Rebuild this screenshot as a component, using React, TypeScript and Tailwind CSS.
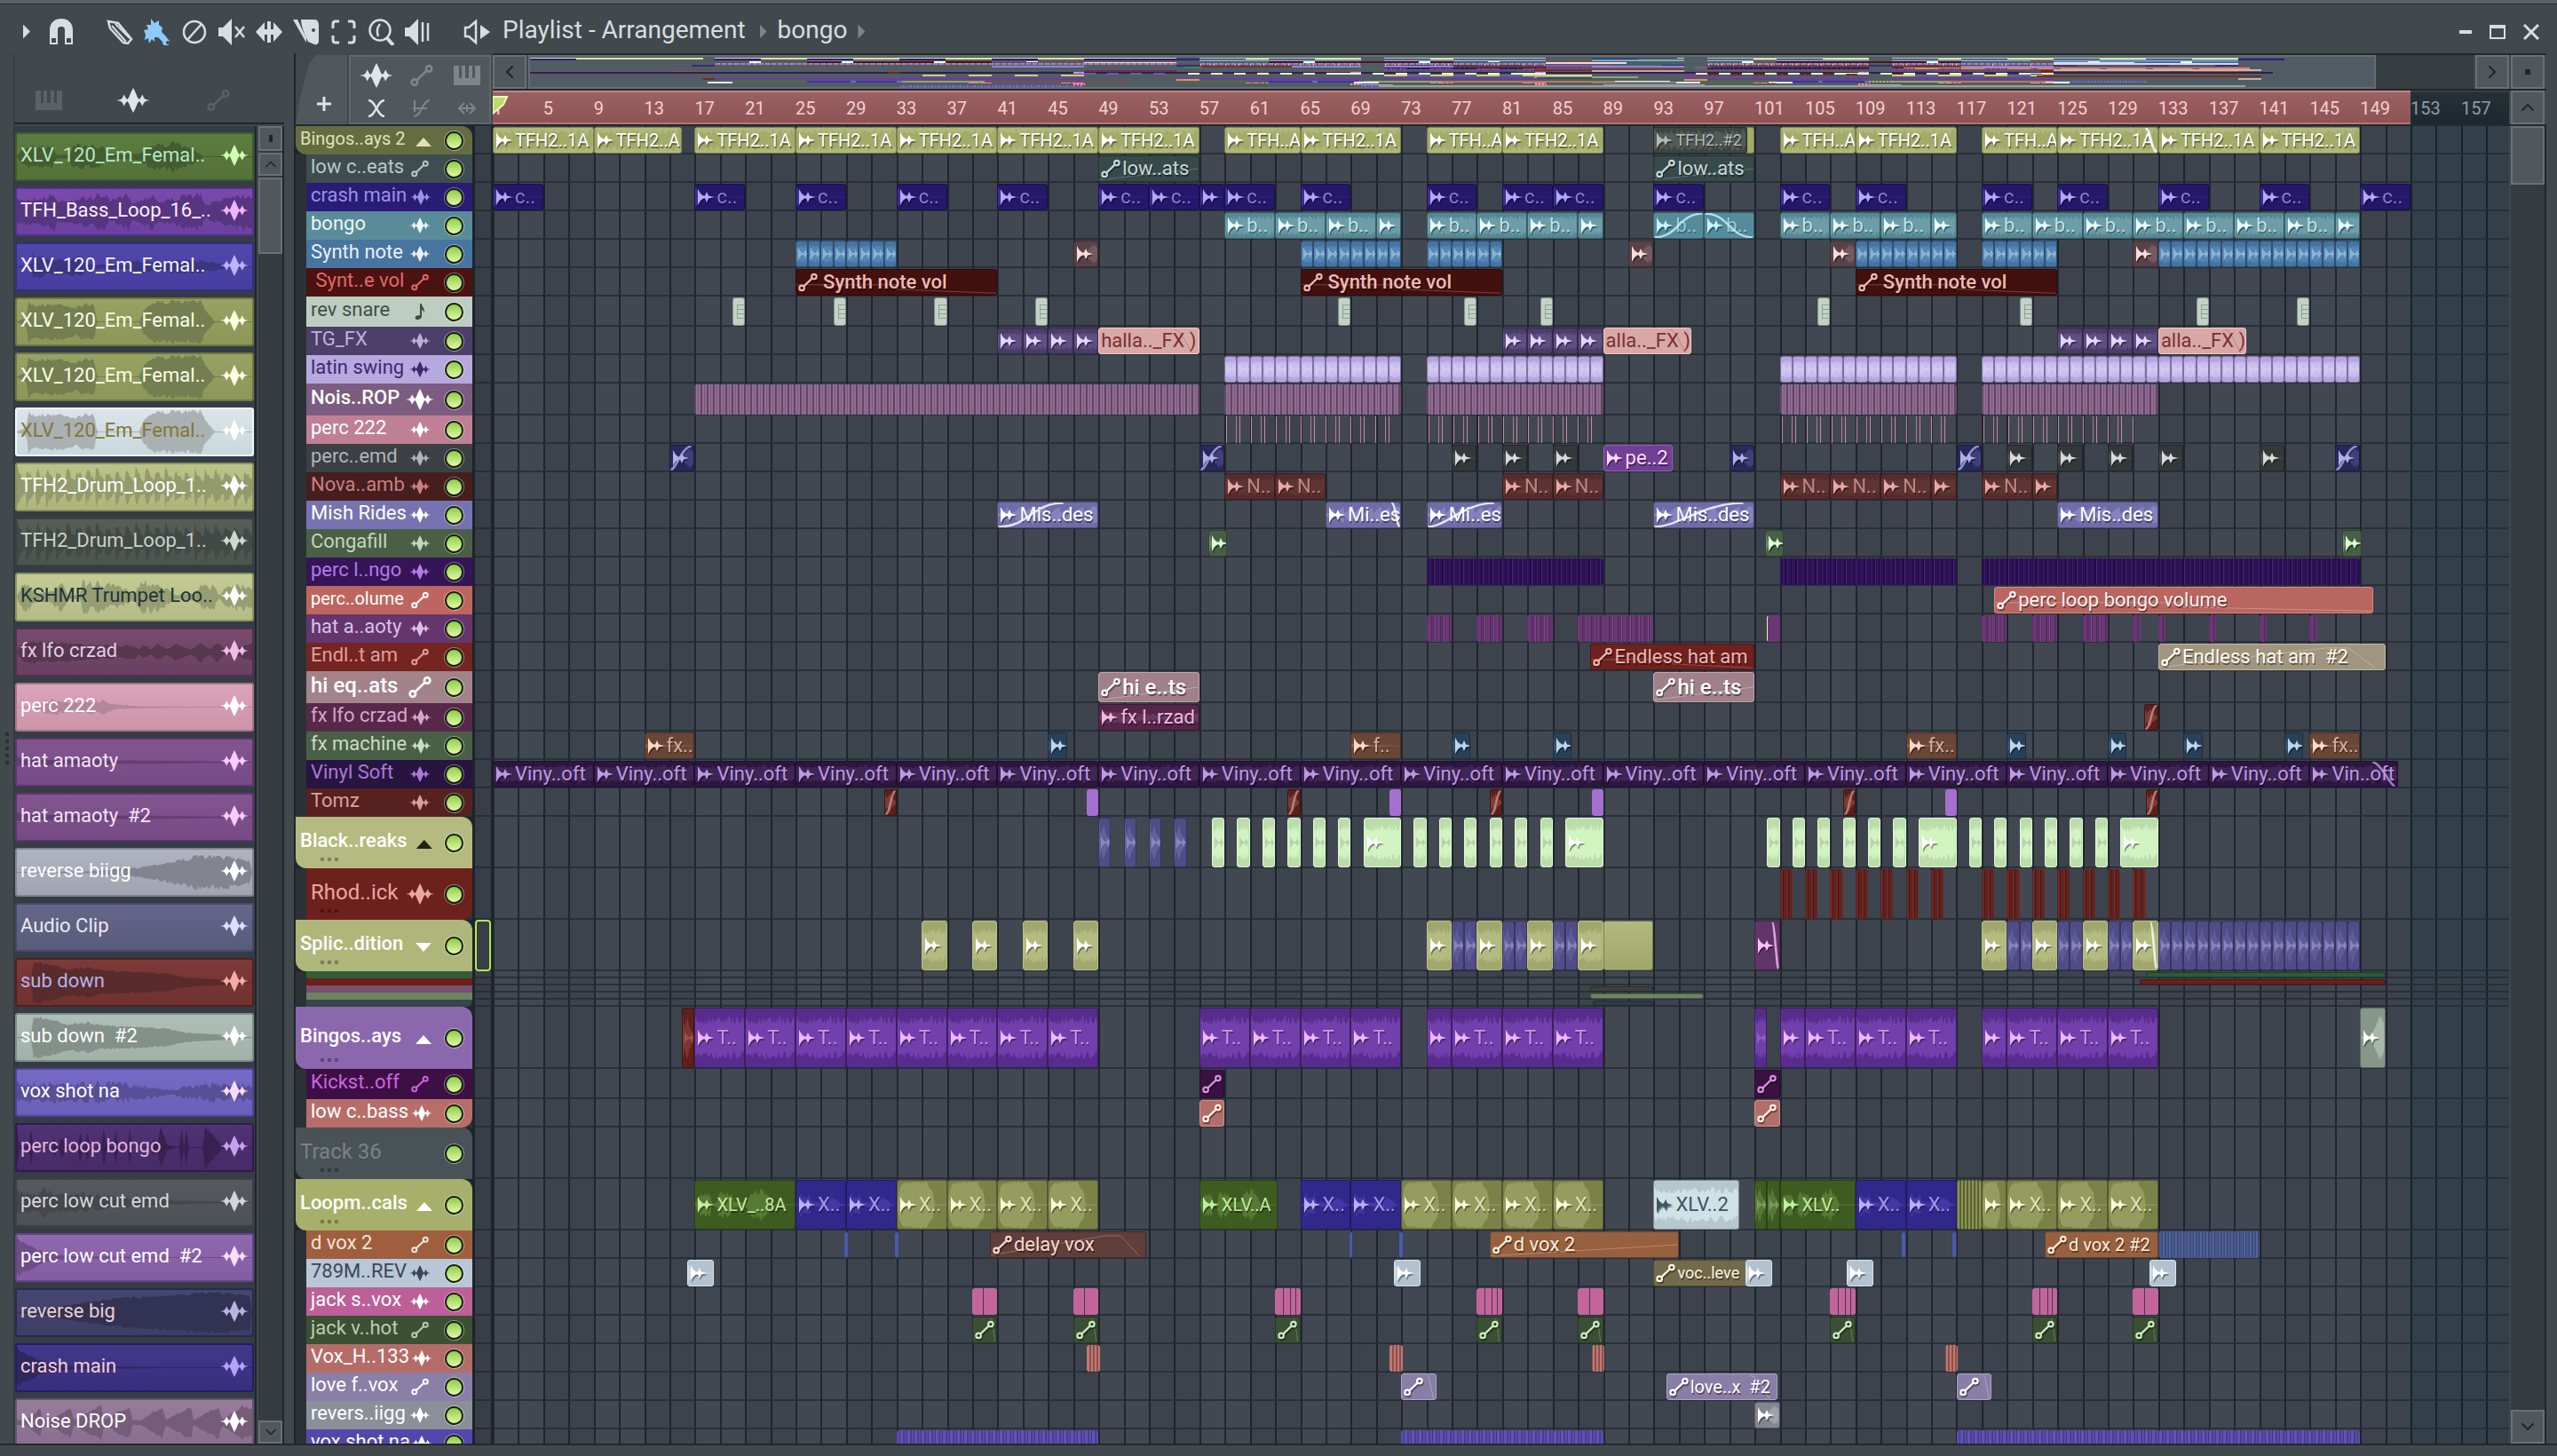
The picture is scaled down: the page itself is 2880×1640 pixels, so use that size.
import type { ReactNode } from "react";
import clsx from "clsx";
import { ChevronDown, ChevronLeft, ChevronRight, ChevronUp } from "lucide-react";

// number of bars that fit in the visible timeline
const BARS = 159.8;
const pct = (bars: number) => `${(bars / BARS) * 100}%`;

/* ---------- waveforms ---------- */

type Env = [number, number][];

// mirrored waveform outline in a 100 x 100 box
function wavePath(env: Env, n: number, rough: number) {
  let seed = 7;
  const rnd = () => {
    seed = (seed * 16807) % 2147483647;
    return seed / 2147483647;
  };
  const amp = (x: number) => {
    for (let i = 1; i < env.length; i++) {
      const [x0, a0] = env[i - 1];
      const [x1, a1] = env[i];
      if (x <= x1) return a0 + ((a1 - a0) * (x - x0)) / (x1 - x0 || 1);
    }
    return env[env.length - 1][1];
  };
  const top: string[] = [];
  const bottom: string[] = [];
  for (let i = 0; i <= n; i++) {
    const x = (i / n) * 100;
    const a = amp(x);
    const t = 50 - 49 * a * (1 - rough * rnd()) - 0.8;
    const b = 50 + 49 * a * (1 - rough * rnd()) + 0.8;
    top.push(`${x.toFixed(1)} ${t.toFixed(1)}`);
    bottom.unshift(`${x.toFixed(1)} ${b.toFixed(1)}`);
  }
  return `M${top.join("L")}L${bottom.join("L")}Z`;
}

// decaying hits, one every `step` percent
function hits(step: number, peak: number, floor: number): Env {
  const env: Env = [];
  for (let x = 0; x < 100; x += step) {
    env.push([x, peak], [x + step * 0.9, floor]);
  }
  env.push([100, floor]);
  return env;
}

const WAVES = {
  voiceA: wavePath([[0, 0], [2, 0.35], [6, 0.55], [15, 0.5], [17, 0.05], [22, 0.1], [24, 0.6], [36, 0.5], [40, 0.1], [52, 0.15], [57, 0.6], [68, 0.7], [76, 0.3], [79, 0], [100, 0]], 160, 0.4),
  voiceB: wavePath([[0, 0], [6, 0.1], [7, 0.75], [14, 0.35], [26, 0.5], [32, 0.1], [48, 0.1], [50, 0.35], [62, 0.15], [70, 0.35], [84, 0.25], [90, 0.05], [100, 0]], 160, 0.5),
  voiceC: wavePath([[0, 0], [4, 0.2], [5, 1], [7, 0.8], [20, 0.85], [25, 0.65], [30, 0.9], [33, 0.75], [34, 0], [52, 0], [54, 0.6], [58, 0.95], [78, 1], [80, 0.6], [84, 0], [100, 0]], 160, 0.2),
  bass: wavePath([[0, 0.6], [12, 0.7], [16, 0.9], [17, 0.5], [30, 0.7], [38, 0.9], [39, 0.5], [48, 0.9], [49, 0.4], [58, 0.9], [60, 0.5], [72, 0.8], [78, 0.9], [80, 0.3], [90, 0.8], [100, 0.85]], 150, 0.35),
  drum: wavePath(hits(4.2, 1, 0.25), 190, 0.4),
  drumClip: wavePath(hits(6, 1, 0.55), 60, 0.3),
  trumpet: wavePath([[0, 0], [3, 0.9], [6, 0.5], [9, 0.2], [15, 0.3], [19, 0.8], [22, 0.1], [27, 0.1], [28, 0.8], [42, 0.6], [50, 0.2], [53, 0.9], [60, 0.7], [68, 0.1], [76, 0.2], [78, 0.6], [84, 0.55], [86, 0.1], [90, 0.7], [100, 0.6]], 150, 0.5),
  lfo: wavePath([[0, 0], [3, 0.55], [20, 0.45], [40, 0.3], [50, 0.3], [52, 0.1], [54, 0.35], [57, 0.1], [60, 0.4], [64, 0.1], [67, 0.45], [74, 0.1], [78, 0.5], [82, 0.1], [85, 0.5], [89, 0.05], [100, 0.4]], 110, 0.3),
  tail: wavePath([[0, 0], [7, 0], [9, 0.15], [14, 0.4], [22, 0.25], [36, 0.35], [42, 0.12], [50, 0.05], [60, 0.02], [100, 0]], 140, 0.5),
  thin: wavePath([[0, 0.2], [4, 0.12], [40, 0.07], [60, 0.06], [100, 0]], 60, 0.3),
  rise: wavePath([[0, 0], [30, 0.03], [50, 0.2], [65, 0.5], [77, 0.8], [92, 0.75], [99, 0.6], [100, 0]], 140, 0.3),
  riseBig: wavePath([[0, 0], [10, 0.1], [25, 0.4], [45, 0.7], [70, 0.85], [82, 0.95], [99, 0.85], [100, 0]], 140, 0.15),
  sub: wavePath([[0, 0], [6, 0], [7, 1], [16, 0.8], [22, 0.6], [30, 0.7], [36, 0.55], [50, 0.5], [64, 0.4], [72, 0.2], [90, 0.1], [100, 0]], 170, 0.15),
  vox: wavePath([[0, 0.5], [20, 0.5], [45, 0.5], [55, 0.35], [65, 0.1], [72, 0.3], [88, 0.5], [100, 0.45]], 150, 0.6),
  bongo: wavePath([[0, 1], [1, 0.1], [5, 0.02], [6, 1], [7, 0], [15, 0], [16, 0.5], [17, 0], [18, 0], [19, 0.5], [21, 0.05], [26, 0], [27, 0.8], [28, 0], [29, 0], [30, 0.7], [31, 0], [36, 0], [37, 1], [38, 0.1], [41, 0], [42, 0.9], [43, 0], [47, 0], [48, 1], [49, 0], [57, 0], [58, 0.4], [60, 0.1], [61, 1], [64, 0.1], [69, 0], [70, 0.9], [71, 0], [72, 1], [73, 0], [79, 0], [80, 1], [83, 0.6], [87, 0.1], [90, 0], [100, 0]], 190, 0.15),
  emd: wavePath([[0, 0.6], [8, 0.5], [12, 0.8], [15, 0.45], [25, 0.5], [40, 0.3], [55, 0.2], [70, 0.08], [100, 0]], 150, 0.5),
  decay: wavePath([[0, 0.9], [4, 0.75], [9, 0.4], [14, 0.15], [25, 0.05], [60, 0.01], [100, 0]], 110, 0.3),
  swell: wavePath([[0, 0.1], [4, 0.1], [10, 0.7], [11, 0.1], [17, 0.3], [23, 0.75], [24, 0.1], [30, 0.5], [36, 0.8], [37, 0.1], [43, 0.5], [48, 0.75], [49, 0.1], [53, 0.1], [62, 0.8], [63, 0.1], [74, 0.8], [75, 0.1], [86, 0.8], [87, 0.1], [96, 0.8], [100, 0.6]], 120, 0.2),
  body: wavePath([[0, 0.75], [20, 0.7], [50, 0.8], [100, 0.7]], 60, 0.4),
  hit: wavePath([[0, 0.9], [15, 0.4], [45, 0.9], [60, 0.45], [100, 0.1]], 24, 0.3),
  full: wavePath([[0, 0.1], [4, 0.7], [10, 0.95], [30, 1], [60, 1], [66, 0.75], [72, 0.6], [76, 0], [100, 0]], 50, 0.1),
};
type WaveName = keyof typeof WAVES;

function Wave({ name, className }: { name: WaveName; className: string }) {
  return (
    <svg viewBox="0 0 100 100" preserveAspectRatio="none" className={clsx("absolute inset-0 w-full h-full", className)}>
      <path d={WAVES[name]} />
    </svg>
  );
}

/* ---------- icons ---------- */

const WaveIcon = ({ className }: { className?: string }) => (
  <svg viewBox="0 0 40 30" fill="currentColor" className={className}>
    <path d="M0 15 5 14 7 12 9 8 11 12 13 14 15 11 17 6 20 0 23 6 25 11 27 14 29 12 31 8 33 12 35 14 40 15 35 16 33 18 31 22 29 18 27 16 25 19 23 24 20 30 17 24 15 19 13 16 11 18 9 22 7 18 5 16Z" />
  </svg>
);

const AutoIcon = ({ className }: { className?: string }) => (
  <svg viewBox="0 0 24 24" fill="none" stroke="currentColor" strokeWidth="2.4" className={className}>
    <circle cx="4.5" cy="19" r="3" />
    <circle cx="19.5" cy="5" r="3" />
    <path d="M7 16.8 17 7.2" />
  </svg>
);

const HalfWaveIcon = ({ className }: { className?: string }) => (
  <svg viewBox="0 0 20 20" fill="currentColor" className={className}>
    <path d="M1 1 4 6 7 8.6 9 8.6 11 4 13 8.6 19 10 13 11.4 11 16 9 11.4 7 11.4 4 14 1 19Z" />
  </svg>
);

const PianoIcon = ({ className }: { className?: string }) => (
  <svg viewBox="0 0 30 22" fill="currentColor" className={className}>
    <path d="M0 0H6V14H9V0H13V14H17V0H21V14H24V0H30V22H0Z" />
  </svg>
);

const NoteIcon = ({ className }: { className?: string }) => (
  <svg viewBox="0 0 20 20" fill="currentColor" className={className}>
    <path d="M10 1H12C12 5 16 6 15 12 14.500 9 13 8 12 8V15C12 18 9 19.500 6.500 19 4 18.500 4 15.500 6.500 14.500 8 14 9.500 14 10 14.500Z" />
  </svg>
);

function ToolIcon({ children, className }: { children: ReactNode; className?: string }) {
  return (
    <svg viewBox="0 0 30 30" fill="currentColor" className={clsx("size-[30px]", className)}>
      {children}
    </svg>
  );
}

const line = { fill: "none", stroke: "currentColor", strokeWidth: 2.5 };

const tools: { name: string; active?: boolean; gap: string; icon: ReactNode }[] = [
  {
    name: "Snap",
    gap: "ml-5",
    icon: (
      <path d="M2 29V13C2 4 8 0 15 0s13 4 13 13v16h-9V13c0-3-1-4-4-4s-4 1-4 4v16ZM4 22v5h5v-5Zm17 0v5h5v-5Z" fillRule="evenodd" />
    ),
  },
  {
    name: "Draw",
    gap: "ml-9",
    icon: (
      <g {...line}>
        <path d="M2 3 13 5 28 23 24 28 19 27 4 11Z" />
        <path d="M6 8 22 26M10 6 26 22" strokeWidth="2" />
      </g>
    ),
  },
  {
    name: "Paint",
    active: true,
    gap: "ml-3",
    icon: (
      <path
        d="M8 0 12 5 17 2 17 7 21 10 20 15 25 20 27 23a4 4 0 1 1-6 3L16 21 12 21 12 26 9 23 6 28 5 22 1 24 2 18 0 13 5 12 3 7 8 7ZM27 25a2 2 0 1 0 .1 0Z"
        fillRule="evenodd"
      />
    ),
  },
  {
    name: "Delete",
    gap: "ml-3",
    icon: (
      <g {...line}>
        <circle cx="15" cy="15" r="12" />
        <path d="M23 6 7 24" />
      </g>
    ),
  },
  {
    name: "Mute",
    gap: "ml-3",
    icon: (
      <g>
        <path d="M0 10H5L15 0V30L5 20H0Z" />
        <path d="M19 9 29 21M29 9 19 21" {...line} />
      </g>
    ),
  },
  { name: "Slip", gap: "ml-3", icon: <path d="M0 15 10 4V12H13V3H17V12H20V4L30 15 20 26V18H17V27H13V18H10V26Z" /> },
  {
    name: "Slice",
    gap: "ml-3",
    icon: <path d="M0 1H5L15 22V27ZM9 1H24C28 1 29 4 29 8V25C29 28 27 30 24 29L17 26Q9 10 9 1ZM23 11a2 2 0 1 0 .1 0Z" fillRule="evenodd" />,
  },
  {
    name: "Select",
    gap: "ml-3",
    icon: <path d="M3 11V6Q3 3 6 3H10M20 3H24Q27 3 27 6V11M27 19V24Q27 27 24 27H20M10 27H6Q3 27 3 24V19" {...line} strokeWidth={3} />,
  },
  {
    name: "Zoom",
    gap: "ml-3",
    icon: (
      <g {...line}>
        <circle cx="14" cy="13" r="11.500" />
        <path d="M12 20Q9 12 14 6" />
        <path d="M22 22 29 30" strokeWidth="4" />
      </g>
    ),
  },
  {
    name: "Playback",
    gap: "ml-3",
    icon: (
      <g>
        <path d="M0 10H5L15 0V30L5 20H0Z" />
        <path d="M20 4V26M26 5V25" {...line} />
      </g>
    ),
  },
];

/* ---------- clips ---------- */

type Kind = {
  bg: string;
  ink: string;
  edge?: string;
  wave?: WaveName;
  fill?: string;
  icon?: "audio" | "auto" | "faint" | "none" | "steps";
  label?: string;
};

const KINDS = {
  drum: { bg: "bg-[#b0b878]", ink: "text-white", wave: "drumClip", fill: "fill-[#a3ab69]", label: "text-[20px]" },
  drumGrey: { bg: "bg-[#3c4542]", ink: "text-[#b5bab7]", wave: "drumClip", fill: "fill-[#525b55]", label: "text-[18px]" },
  drumEnd: { bg: "bg-[#a4ab67]", ink: "text-white", icon: "none" },
  lowAuto: { bg: "bg-[#374948]", ink: "text-[#c5d8d8]", icon: "auto" },
  crash: { bg: "bg-[#25186a]", ink: "text-[#b5a8ff]", wave: "decay", fill: "fill-[#3c2f92]", label: "text-[22px] opacity-70" },
  bongo: { bg: "bg-[#548794]", ink: "text-[#e6ffff]", wave: "drumClip", fill: "fill-[#6c9da8]", label: "text-[22px] opacity-70" },
  bongoFade: { bg: "bg-[#558c9c]", ink: "text-[#c8f4ff]", label: "text-[22px] opacity-60" },
  synth: { bg: "bg-[#4374a4]", ink: "text-[#a4c8dc]", wave: "body", fill: "fill-[#5686b6]", icon: "faint" },
  brown: { bg: "bg-[#584248]", ink: "text-[#ffdcdc]", wave: "rise", fill: "fill-[#745a60]" },
  volAuto: { bg: "bg-[#42100f]", ink: "text-[#f2b8b0]", icon: "auto", label: "text-[22px] font-medium pl-1.5" },
  snare: { bg: "bg-[#c3d2c6]", ink: "text-[#8da091]", icon: "steps" },
  tg: { bg: "bg-[#4a3d6a]", ink: "text-[#e4d6ff]", wave: "body", fill: "fill-[#5d5082]" },
  halla: { bg: "bg-[#d8a8a6]", ink: "text-[#7a3030]", edge: "border-[#f3c9c4]", icon: "none", label: "text-[22px] [text-shadow:none]" },
  latin: { bg: "bg-[#b5a4e0]", ink: "text-[#d8d0ea]", wave: "body", fill: "fill-[#c9bcf0]", icon: "faint" },
  noise: { bg: "bg-[repeating-linear-gradient(90deg,#674968_0_1px,#8f6d94_1px_3px,#7a587e_3px_4px,#8f6d94_4px_6px,#5c405e_6px_7px)]", ink: "", icon: "none", edge: "border-transparent" },
  perc222: { bg: "bg-[repeating-linear-gradient(90deg,transparent_0_1px,#c98a9e_1px_2px,transparent_2px_12px,#b47c90_12px_13px,transparent_13px_16px,#c98a9e_16px_17px,transparent_17px_28px)]", ink: "", icon: "none", edge: "border-transparent" },
  navy: { bg: "bg-[#29285a]", ink: "text-[#b0b0f0]", wave: "rise", fill: "fill-[#413f78]" },
  emd: { bg: "bg-[#34383b]", ink: "text-[#dadada]", wave: "emd", fill: "fill-[#494d4f]" },
  emd2: { bg: "bg-[#713f94]", ink: "text-[#ffd9ff]", edge: "border-[#9460b6]" },
  nova: { bg: "bg-[#552c2b]", ink: "text-[#eba9a6]", wave: "body", fill: "fill-[#5f3533]", label: "text-[22px] opacity-70" },
  mish: { bg: "bg-[#706ca8]", ink: "text-white", wave: "swell", fill: "fill-[#8682c0]" },
  conga: { bg: "bg-[#456044]", ink: "text-[#dcffd8]", wave: "decay", fill: "fill-[#6a8c66]" },
  percLoop: { bg: "bg-[repeating-linear-gradient(90deg,#2a0f50_0_2px,#3a1b66_2px_3px,#2e1258_3px_5px,#250a48_5px_7px,#432872_7px_8px,#2e1258_8px_11px)]", ink: "", icon: "none", edge: "border-transparent" },
  percVol: { bg: "bg-[#b96560]", ink: "text-[#fff0ec]", edge: "border-[#d98a80]", icon: "auto" },
  hat: { bg: "bg-[repeating-linear-gradient(90deg,#6e3678_0_4px,#48304f_4px_5px,#633070_5px_8px,#844a90_8px_9px,#3e3a48_9px_10px)]", ink: "", icon: "none", edge: "border-transparent" },
  hatEnd: { bg: "bg-[#6b3676]", ink: "", icon: "none", edge: "border-transparent border-l-[#e8f0b0]" },
  endless: { bg: "bg-[#6d2220]", ink: "text-[#f0b4ac]", icon: "auto" },
  endless2: { bg: "bg-[#a0957f]", ink: "text-[#fffaf0]", edge: "border-[#c2b8a2]", icon: "auto" },
  hiEq: { bg: "bg-[#a08089]", ink: "text-white", edge: "border-[#c2a4ac]", icon: "auto", label: "text-[24px] font-medium" },
  lfo: { bg: "bg-[#55264a]", ink: "text-[#f0b8e2]", wave: "lfo", fill: "fill-[#693a5e]" },
  tomRed: { bg: "bg-[#5a1f1c]", ink: "text-[#c89088]", wave: "hit", fill: "fill-[#7c3c36]", icon: "none" },
  fx: { bg: "bg-[#694638]", ink: "text-[#ffd8c0]", wave: "thin", fill: "fill-[#845d4c]", label: "text-[22px] opacity-70" },
  fxBlue: { bg: "bg-[#2a4059]", ink: "text-[#b8d8f0]", wave: "emd", fill: "fill-[#365370]" },
  vinyl: { bg: "bg-[#2c1640]", ink: "text-[#c098e6]", wave: "body", fill: "fill-[#3e2654]" },
  tomPurple: { bg: "bg-[linear-gradient(90deg,#a56fd0_0_60%,#7c50a4_60%_68%,#a56fd0_68%)]", ink: "", icon: "none", edge: "border-transparent" },
  breakBlue: { bg: "bg-[#504c86]", ink: "text-[#9c98c6]", wave: "hit", fill: "fill-[#65619e]", icon: "faint" },
  breakGreen: { bg: "bg-[#bbdcab]", ink: "text-[#b4c0b0]", edge: "border-[#e0f8d4]", wave: "body", fill: "fill-[#d2f4c0]", icon: "faint" },
  breakLong: { bg: "bg-[#bbdcab]", ink: "text-white", edge: "border-[#e0f8d4]", wave: "body", fill: "fill-[#d2f4c0]" },
  rhod: { bg: "bg-[repeating-linear-gradient(90deg,#742620_0_2px,#4c1512_2px_3px,#68201b_3px_5px,#3b3034_5px_6px)]", ink: "", icon: "none", edge: "border-transparent" },
  splice: { bg: "bg-[#a0a66c]", ink: "text-white", wave: "body", fill: "fill-[#b4bb80]", edge: "border-[#bac284]" },
  splicePlain: { bg: "bg-linear-to-b from-[#b2b97c] to-[#a0a76c]", ink: "", icon: "none" },
  spliceBlue: { bg: "bg-[#504c86]", ink: "text-[#9c98c6]", wave: "hit", fill: "fill-[#5f5b98]", icon: "faint" },
  splicePurple: { bg: "bg-[#623569]", ink: "text-[#ffc0f8]" },
  thinGreen: { bg: "bg-[#2f5a36]", ink: "", icon: "none" },
  thinRed: { bg: "bg-[#6a201c]", ink: "", icon: "none" },
  thinGrey: { bg: "bg-[#3e403c]", ink: "", icon: "none" },
  thinMoss: { bg: "bg-[#6c8560]", ink: "", icon: "none" },
  thinDark: { bg: "bg-[#2f3c46]", ink: "", icon: "none" },
  bass: { bg: "bg-[#582c8c]", ink: "text-[#f2b8ff]", wave: "body", fill: "fill-[#7240ac]", label: "text-[22px] opacity-70" },
  bassTail: { bg: "bg-[#582c8c]", ink: "text-[#9c6cc8]", wave: "body", fill: "fill-[#7240ac]", icon: "faint" },
  bassRed: { bg: "bg-[#5e201c]", ink: "text-[#a06058]", wave: "hit", fill: "fill-[#7c3630]", icon: "faint" },
  subEnd: { bg: "bg-[#869688]", ink: "text-white", wave: "rise", fill: "fill-[#a8b8ac]" },
  kick: { bg: "bg-[#3b1142]", ink: "text-[#d890e4]", icon: "auto" },
  lowBass: { bg: "bg-[#b46e6a]", ink: "text-[#fff0ea]", edge: "border-[#d49088]", icon: "auto" },
  voxGreen: { bg: "bg-[#3e5b22]", ink: "text-[#c0f09a]", wave: "voiceA", fill: "fill-[#567a36]", label: "text-[20px]" },
  voxGreenTail: { bg: "bg-[#3e5b22]", ink: "text-[#88a870]", wave: "hit", fill: "fill-[#567a36]", icon: "faint" },
  voxBlue: { bg: "bg-[#32278a]", ink: "text-[#b8b0ff]", wave: "voiceB", fill: "fill-[#4438a6]", label: "text-[22px] opacity-80" },
  voxOlive: { bg: "bg-[#7a8248]", ink: "text-[#ffffd8]", wave: "full", fill: "fill-[#959c60]", label: "text-[22px] opacity-70" },
  oliveStripe: { bg: "bg-[repeating-linear-gradient(90deg,#8c9452_0_2px,#5a6234_2px_4px)]", ink: "", icon: "none" },
  voxWhite: { bg: "bg-[#b6c8ce]", ink: "text-[#3c5560]", wave: "body", fill: "fill-[#cfe2e8]", label: "text-[22px] [text-shadow:none]" },
  voxThin: { bg: "bg-[#4c5ca0]", ink: "", icon: "none" },
  delay: { bg: "bg-[#5f3e3c]", ink: "text-[#ffd8cc]", icon: "auto" },
  dvox: { bg: "bg-[#97603f]", ink: "text-[#ffeada]", icon: "auto" },
  dvoxShort: { bg: "bg-[#97603f]", ink: "text-[#ffeada]", icon: "auto", label: "text-[20px]" },
  dvoxStripe: { bg: "bg-[repeating-linear-gradient(90deg,#465894_0_3px,#384a74_3px_4px,#5064a2_4px_6px,#3c4452_6px_7px)]", ink: "", icon: "none", edge: "border-transparent" },
  rev: { bg: "bg-[#b4c2d0]", ink: "text-white", edge: "border-[#d8e4ee]", wave: "decay", fill: "fill-[#ccd8e4]" },
  voc: { bg: "bg-[#736a4c]", ink: "text-[#fff8e0]", icon: "auto", label: "text-[18px]" },
  jackPink: { bg: "bg-[linear-gradient(90deg,#c4649c_0_43%,#43394a_43%_47%,#c4649c_47%)]", ink: "", icon: "none", edge: "border-transparent" },
  jackPink3: { bg: "bg-[linear-gradient(90deg,#c4649c_0_28%,#43394a_28%_32%,#c4649c_32%_60%,#43394a_60%_64%,#c4649c_64%_82%,#43394a_82%_86%,#c4649c_86%)]", ink: "", icon: "none", edge: "border-transparent" },
  jackGreen: { bg: "bg-[#3a4f33]", ink: "text-[#ccecc0]", icon: "auto" },
  voxH: { bg: "bg-[repeating-linear-gradient(90deg,#c07a72_0_2px,#8c504c_2px_4px)]", ink: "", icon: "none", edge: "border-transparent" },
  love: { bg: "bg-[#897ea6]", ink: "text-white", edge: "border-[#aca2c6]", icon: "auto", label: "text-[20px]" },
  revers: { bg: "bg-[#84858f]", ink: "text-white", wave: "rise", fill: "fill-[#a0a2ac]" },
  voxShot: { bg: "bg-[repeating-linear-gradient(90deg,#5c4ab4_0_2px,#41405e_2px_3px,#6450c0_3px_6px,#4a4184_6px_8px)]", ink: "", icon: "none", edge: "border-transparent" },
} satisfies Record<string, Kind>;

type Fade = "in" | "inHalf" | "inSoft" | "down" | "out" | "steep" | "rise" | "fall" | "drop" | "tent";
type ClipData = { kind: keyof typeof KINDS; at: number; len: number; label?: string; fade?: Fade };

const c = (kind: ClipData["kind"], at: number, len: number, label?: string, fade?: Fade): ClipData => ({ kind, at, len, label, fade });
// same clip at a list of bars
const each = (kind: ClipData["kind"], bars: number[], len: number, label?: string, fade?: Fade) =>
  bars.map((at) => c(kind, at, len, label, fade));
// back-to-back clips from one bar to another
const run = (kind: ClipData["kind"], from: number, to: number, step: number, label?: string) => {
  const out: ClipData[] = [];
  for (let at = from; at < to; at += step) out.push(c(kind, at, step, label));
  return out;
};

const FADES: Record<Fade, { d: string; soft?: boolean }> = {
  in: { d: "M0 98C50 98 50 2 100 2" },
  inHalf: { d: "M0 98C32 98 34 2 66 2" },
  inSoft: { d: "M0 98C24 98 50 2 90 2" },
  down: { d: "M0 2C50 2 50 98 100 98" },
  out: { d: "M88 2C94 2 94 98 100 98" },
  steep: { d: "M72 2C82 2 92 98 98 98" },
  rise: { d: "M0 95 100 50", soft: true },
  fall: { d: "M0 60 50 60 50 78 100 94", soft: true },
  drop: { d: "M76 4C84 10 88 70 94 98", soft: true },
  tent: { d: "M0 92 74 14 84 14 96 96", soft: true },
};

function Clip({ kind, at, len, label, fade }: ClipData) {
  const k: Kind = KINDS[kind];
  const icon = k.icon ?? "audio";
  return (
    <div
      className={clsx(
        "absolute top-px bottom-px flex items-center rounded-[3px] border overflow-hidden",
        k.bg,
        k.ink,
        k.edge ?? "border-black/30"
      )}
      style={{ left: pct(at - 1), width: pct(len) }}
    >
      {k.wave && <Wave name={k.wave} className={k.fill ?? ""} />}
      {icon === "audio" && <HalfWaveIcon className="relative size-5 ml-0.5 shrink-0 drop-shadow-[1px_2px_0px_rgba(0,0,0,0.4)]" />}
      {icon === "faint" && <HalfWaveIcon className="relative size-4 ml-px shrink-0 opacity-70" />}
      {icon === "auto" && <AutoIcon className="relative size-[22px] ml-0.5 shrink-0 drop-shadow-[1px_2px_0px_rgba(0,0,0,0.4)]" />}
      {icon === "steps" && (
        <span className="ml-1 flex flex-1 flex-col gap-1 border-l border-current">
          <i className="h-px bg-current" />
          <i className="h-px bg-current" />
          <i className="h-px bg-current" />
          <i className="h-px bg-current" />
        </span>
      )}
      {label && (
        <span
          className={clsx(
            "relative pl-0.5 leading-7 whitespace-pre [text-shadow:1px_2px_0px_rgba(0,0,0,0.45)]",
            k.label ?? "text-[22px]"
          )}
        >
          {label}
        </span>
      )}
      {fade && (
        <svg viewBox="0 0 100 100" preserveAspectRatio="none" className="absolute inset-0 w-full h-full">
          <path
            d={FADES[fade].d}
            fill="none"
            stroke="currentColor"
            strokeWidth={FADES[fade].soft ? 1 : 2.5}
            vectorEffect="non-scaling-stroke"
            opacity={FADES[fade].soft ? 0.3 : 0.8}
          />
        </svg>
      )}
    </div>
  );
}

/* ---------- tracks ---------- */

type Track = {
  name: string;
  h: string;
  head: string;
  icon: "wave" | "auto" | "note" | "up" | "down" | "none";
  iconInk?: string;
  group?: boolean;
  last?: boolean;
  dots?: boolean;
  big?: boolean;
  selected?: boolean;
  clips: ClipData[];
};

const JACK = [39, 47, 63, 79, 87, 107, 123, 131];

const tracks: Track[] = [
  {
    name: "Bingos..ays 2", h: "h-8", head: "bg-[#656c41] text-[#dfe3b4] text-[20px]", icon: "up", group: true,
    clips: [
      c("drum", 1, 8, "TFH2..1A"), c("drum", 9, 7, "TFH2..A"), ...run("drum", 17, 57, 8, "TFH2..1A"),
      c("drum", 59, 6, "TFH..A"), c("drum", 65, 8, "TFH2..1A"), c("drum", 75, 6, "TFH..A"), c("drum", 81, 8, "TFH2..1A"),
      c("drumEnd", 100, 1), c("drumGrey", 93, 7.4, "TFH2..#2"),
      c("drum", 103, 6, "TFH..A"), c("drum", 109, 8, "TFH2..1A"), c("drum", 119, 6, "TFH..A"),
      c("drum", 125, 8, "TFH2..1A", "out"), c("drum", 133, 8, "TFH2..1A"), c("drum", 141, 8, "TFH2..1A"),
    ],
  },
  {
    name: "low c..eats", h: "h-8", head: "bg-[#3d4d50] text-[#b9c9c9] text-[22px]", icon: "auto",
    clips: each("lowAuto", [49, 93], 8, "low..ats", "rise"),
  },
  {
    name: "crash main", h: "h-8", head: "bg-[#281c74] text-[#9c90e8] text-[22px]", icon: "wave",
    clips: [
      c("crash", 57, 2),
      ...each("crash", [1, 17, 25, 33, 41, 49, 53, 59, 65, 75, 81, 85, 93, 103, 109, 119, 125, 133, 141, 149], 4, "c.."),
    ],
  },
  {
    name: "bongo", h: "h-8", head: "bg-[#5a8b99] text-[#eaf6f6] text-[22px]", icon: "wave",
    clips: [
      ...run("bongo", 59, 71, 4, "b.."), c("bongo", 71, 2), ...run("bongo", 75, 87, 4, "b.."), c("bongo", 87, 2),
      c("bongoFade", 93, 4, "b..", "in"), c("bongoFade", 97, 4, "b..", "down"),
      ...run("bongo", 103, 115, 4, "b.."), c("bongo", 115, 2), ...run("bongo", 119, 147, 4, "b.."), c("bongo", 147, 2),
    ],
  },
  {
    name: "Synth note", h: "h-8", head: "bg-[#4874a0] text-[#e8f0f8] text-[22px]", icon: "wave",
    clips: [
      ...run("synth", 25, 33, 1), ...run("synth", 65, 73, 1), ...run("synth", 75, 81, 1), ...run("synth", 109, 117, 1),
      ...run("synth", 119, 125, 1), ...run("synth", 133, 149, 1), ...each("brown", [47, 91, 107, 131], 2),
    ],
  },
  {
    name: " Synt..e vol", h: "h-8", head: "bg-[#4a1312] text-[#e06a62] text-[22px]", icon: "auto",
    clips: each("volAuto", [25, 65, 109], 16, "Synth note vol", "fall"),
  },
  {
    name: "rev snare", h: "h-[34px]", head: "bg-[#becdc2] text-[#3e4f45] text-[22px]", icon: "note",
    clips: each("snare", [20, 28, 36, 44, 68, 78, 84, 106, 122, 136, 144], 1),
  },
  {
    name: "TG_FX", h: "h-8", head: "bg-[#4c3f68] text-[#bdb0dc] text-[22px]", icon: "wave",
    clips: [
      c("halla", 49, 8, "halla.._FX )", "drop"), c("halla", 89, 7, "alla.._FX )", "drop"), c("halla", 133, 7, "alla.._FX )", "drop"),
      ...run("tg", 41, 49, 2), ...run("tg", 81, 89, 2), ...run("tg", 125, 133, 2),
    ],
  },
  {
    name: "latin swing", h: "h-8", head: "bg-[#b7a8de] text-[#3a2a72] text-[22px]", icon: "wave",
    clips: [...run("latin", 59, 73, 1), ...run("latin", 75, 89, 1), ...run("latin", 103, 117, 1), ...run("latin", 119, 149, 1)],
  },
  {
    name: "Nois..ROP", h: "h-9", head: "bg-[#7c5c80] text-white text-[22px] font-medium", icon: "wave", big: true,
    clips: [c("noise", 17, 40), ...each("noise", [59, 75, 103, 119], 14)],
  },
  {
    name: "perc 222", h: "h-8", head: "bg-[#bf8095] text-white text-[22px]", icon: "wave",
    clips: [...each("perc222", [59, 75, 103], 14), c("perc222", 119, 12.2)],
  },
  {
    name: "perc..emd", h: "h-8", head: "bg-[#3c4044] text-[#b0b5ba] text-[22px]", icon: "wave",
    clips: [
      ...each("navy", [15, 57, 117, 147], 2, undefined, "inSoft"), c("navy", 99, 2),
      ...each("emd", [77, 81, 85, 121, 125, 129, 133, 141], 2), c("emd2", 89, 5.5, "pe..2"),
    ],
  },
  {
    name: "Nova..amb", h: "h-8", head: "bg-[#461e1d] text-[#c98080] text-[22px]", icon: "wave",
    clips: [...each("nova", [59, 63, 81, 85, 103, 107, 111, 119], 4, "N.."), ...each("nova", [115, 123], 2)],
  },
  {
    name: "Mish Rides", h: "h-8", head: "bg-[#7773b0] text-white text-[22px]", icon: "wave",
    clips: [
      c("mish", 41, 8, "Mis..des", "inHalf"), c("mish", 67, 6, "Mi..es", "out"), c("mish", 75, 6, "Mi..es", "inSoft"),
      c("mish", 93, 8, "Mis..des", "inSoft"), c("mish", 125, 8, "Mis..des"),
    ],
  },
  {
    name: "Congafill", h: "h-8", head: "bg-[#4a5f45] text-[#c3d6bf] text-[22px]", icon: "wave",
    clips: each("conga", [57.7, 101.8, 147.6], 1.5),
  },
  {
    name: "perc l..ngo", h: "h-8", head: "bg-[#351458] text-[#b47ae6] text-[22px]", icon: "wave",
    clips: [...each("percLoop", [75, 103], 14), c("percLoop", 119, 30)],
  },
  {
    name: "perc..olume", h: "h-8", head: "bg-[#bd6660] text-white text-[20px]", icon: "auto",
    clips: [c("percVol", 120, 30, "perc loop bongo volume", "fall")],
  },
  {
    name: "hat a..aoty", h: "h-8", head: "bg-[#64366d] text-[#dcc0e6] text-[22px]", icon: "wave",
    clips: [
      ...each("hat", [75, 79, 83, 119, 123, 127], 2), c("hat", 87, 6), c("hatEnd", 102, 1),
      ...each("hat", [131, 133, 137, 141, 145], 0.6),
    ],
  },
  {
    name: "Endl..t am", h: "h-8", head: "bg-[#742522] text-[#e0a09a] text-[22px]", icon: "auto",
    clips: [c("endless", 88, 13, "Endless hat am", "fall"), c("endless2", 133, 18, "Endless hat am  #2", "tent")],
  },
  {
    name: "hi eq..ats", h: "h-9", head: "bg-[#a2838b] text-white text-[24px] font-medium", icon: "auto", big: true,
    clips: each("hiEq", [49, 93], 8, "hi e..ts", "rise"),
  },
  {
    name: "fx lfo crzad", h: "h-8", head: "bg-[#58284a] text-[#d8a6cc] text-[22px]", icon: "wave",
    clips: [c("lfo", 49, 8, "fx l..rzad"), c("tomRed", 131.9, 1.1, undefined, "in")],
  },
  {
    name: "fx machine", h: "h-8", head: "bg-[#4a6046] text-[#c9dcc5] text-[22px]", icon: "wave",
    clips: [
      ...each("fx", [13, 113, 145], 4, "fx.."), c("fx", 69, 4, "f.."), ...each("fxBlue", [45, 77, 85, 121, 129, 135, 143], 1.5),
    ],
  },
  {
    name: "Vinyl Soft", h: "h-8", head: "bg-[#281440] text-[#a87ad6] text-[22px]", icon: "wave",
    clips: [...run("vinyl", 1, 145, 8, "Viny..oft"), c("vinyl", 145, 7, "Vin..oft", "steep")],
  },
  {
    name: "Tomz", h: "h-8", head: "bg-[#56211f] text-[#dca09a] text-[22px]", icon: "wave", last: true,
    clips: [...each("tomRed", [32, 64, 80, 108, 132], 1, undefined, "in"), ...each("tomPurple", [48.1, 72.1, 88.1, 116.1], 0.9)],
  },
  {
    name: "Black..reaks", h: "h-[58px]", head: "bg-[#b4ba80] text-white text-[22px] font-medium", icon: "up", iconInk: "text-[#20220f]", group: true, dots: true,
    clips: [
      ...each("breakBlue", [49, 51, 53, 55], 1), ...each("breakGreen", [58, 60, 62, 64, 66, 68], 1),
      ...each("breakGreen", [74, 76, 78, 80, 82, 84, 102, 104, 106, 108, 110, 112, 118, 120, 122, 124, 126, 128], 1),
      ...each("breakLong", [70, 86, 114, 130], 3),
    ],
  },
  {
    name: "Rhod..ick", h: "h-[58px]", head: "bg-[#6c211d] text-[#e8a8a0] text-[24px]", icon: "wave", big: true, last: true, dots: true,
    clips: each("rhod", [103, 105, 107, 109, 111, 113, 115, 119, 121, 123, 125, 127, 129, 131], 1),
  },
  {
    name: "Splic..dition", h: "h-[58px]", head: "bg-[#afb679] text-white text-[22px] font-medium", icon: "down", group: true, dots: true, selected: true,
    clips: [
      ...each("splice", [35, 39, 43, 47, 75, 79, 83, 87, 119, 123, 127], 2), c("splicePlain", 89, 4),
      ...each("spliceBlue", [77, 78, 81, 82, 85, 86, 121, 122, 125, 126, 129, 130], 1), ...run("spliceBlue", 133, 149, 1),
      c("splicePurple", 101, 2, undefined, "steep"), c("splice", 131, 2, undefined, "steep"),
    ],
  },
  { name: "", h: "h-2", head: "bg-[#335c38]", icon: "none", clips: [c("thinGreen", 132, 19)] },
  { name: "", h: "h-2", head: "bg-[#6a201c]", icon: "none", clips: [c("thinRed", 131.5, 19.5)] },
  { name: "", h: "h-2", head: "bg-[#77506f]", icon: "none", clips: [c("thinGrey", 88, 5)] },
  { name: "", h: "h-2", head: "bg-[#6a845f]", icon: "none", clips: [c("thinMoss", 88, 9)] },
  { name: "", h: "h-2", head: "bg-[#37454d]", icon: "none", last: true, clips: [c("thinDark", 88.2, 4.8)] },
  {
    name: "Bingos..ays", h: "h-[70px]", head: "bg-[#8b68ae] text-white text-[22px] font-medium", icon: "up", group: true, dots: true,
    clips: [
      c("bassRed", 16, 1), ...run("bass", 17, 49, 4, "T.."), ...run("bass", 57, 73, 4, "T.."), c("bass", 75, 2),
      ...run("bass", 77, 89, 4, "T.."), c("bassTail", 101, 1), c("bass", 103, 2), ...run("bass", 105, 117, 4, "T.."),
      c("bass", 119, 2), ...run("bass", 121, 133, 4, "T.."), c("subEnd", 149, 2),
    ],
  },
  { name: "Kickst..off", h: "h-[34px]", head: "bg-[#3e0f45] text-[#c868dc] text-[22px]", icon: "auto", clips: each("kick", [57, 101], 2) },
  { name: "low c..bass", h: "h-8", head: "bg-[#b76e6a] text-white text-[22px]", icon: "wave", last: true, clips: each("lowBass", [57, 101], 2) },
  { name: "Track 36", h: "h-[58px]", head: "bg-[#495256] text-[#7c8286] text-[24px]", icon: "none", group: true, dots: true, clips: [] },
  {
    name: "Loopm..cals", h: "h-[58px]", head: "bg-[#a6b06a] text-white text-[22px] font-medium", icon: "up", group: true, dots: true,
    clips: [
      c("voxGreen", 17, 8, "XLV_..8A"), ...run("voxBlue", 25, 33, 4, "X.."), ...run("voxOlive", 33, 49, 4, "X.."),
      c("voxGreen", 57, 6.2, "XLV..A"), ...run("voxBlue", 65, 73, 4, "X.."), ...run("voxOlive", 73, 89, 4, "X.."),
      c("voxWhite", 93, 6.8, "XLV..2"), ...run("voxGreenTail", 101, 103, 1), c("voxGreen", 103, 6, "XLV.."),
      ...run("voxBlue", 109, 117, 4, "X.."), c("oliveStripe", 117, 2), c("voxOlive", 119, 2), ...run("voxOlive", 121, 133, 4, "X.."),
    ],
  },
  {
    name: "d vox 2", h: "h-8", head: "bg-[#9f5f3f] text-[#f5e4d8] text-[22px]", icon: "auto",
    clips: [
      ...each("voxThin", [28.8, 32.8, 68.8, 72.8, 112.6, 116.6], 0.4), c("delay", 40.4, 12.4, "delay vox", "tent"),
      c("dvox", 80, 15, "d vox 2", "rise"), c("dvoxShort", 124, 9, "d vox 2 #2"), c("dvoxStripe", 133, 8),
    ],
  },
  {
    name: "789M..REV", h: "h-8", head: "bg-[#b9c7d6] text-[#39485a] text-[22px]", icon: "wave",
    clips: [c("voc", 93, 7.5, "voc..leve"), ...each("rev", [16.4, 72.4, 100.3, 108.3, 132.3], 2.1)],
  },
  {
    name: "jack s..vox", h: "h-8", head: "bg-[#bd5f98] text-white text-[22px]", icon: "wave",
    clips: [...each("jackPink", [39, 47, 87, 131], 2), ...each("jackPink3", [63, 79, 107, 123], 2)],
  },
  { name: "jack v..hot", h: "h-8", head: "bg-[#3c5033] text-[#b8cfae] text-[22px]", icon: "auto", clips: each("jackGreen", JACK, 2, undefined, "drop") },
  { name: "Vox_H..133", h: "h-8", head: "bg-[#b46c68] text-white text-[22px]", icon: "wave", clips: each("voxH", [48.1, 72.1, 88.1, 116.1], 1) },
  {
    name: "love f..vox", h: "h-8", head: "bg-[#8a7fa6] text-white text-[22px]", icon: "auto",
    clips: [...each("love", [73, 117], 2.8, undefined, "drop"), c("love", 94, 8.8, "love..x  #2", "drop")],
  },
  { name: "revers..iigg", h: "h-8", head: "bg-[#8b8f98] text-white text-[22px]", icon: "wave", clips: [c("revers", 101, 2)] },
  {
    name: "vox shot na", h: "h-8", head: "bg-[#5546ac] text-white text-[22px]", icon: "wave",
    clips: [...each("voxShot", [33, 73], 16), c("voxShot", 117, 32)],
  },
];

function TrackHeader({ t }: { t: Track }) {
  return (
    <div className={clsx("w-[199px] shrink-0 flex", t.group ? "bg-[#1f262d]" : "pl-3 bg-[#2b3135]")}>
      <div
        className={clsx(
          "relative flex flex-1 items-center pl-[5px] pr-2.5 overflow-hidden",
          t.head,
          t.group && "rounded-tr-xl rounded-bl-xl",
          t.last && "rounded-br-xl"
        )}
      >
        {t.name && (
          <>
            <span className="flex-1 pb-1 leading-7 whitespace-pre">{t.name}</span>
            <span className={clsx("flex w-8 justify-center mr-3", t.iconInk)}>
              {t.icon === "wave" && <WaveIcon className={t.big ? "h-6 w-8" : "h-[18px] w-6"} />}
              {t.icon === "auto" && <AutoIcon className={t.big ? "w-8 h-[26px]" : "w-6 h-5"} />}
              {t.icon === "note" && <NoteIcon className="size-5" />}
              {t.icon === "up" && <i className="ml-2 mt-1 w-[18px] h-2.5 bg-current [clip-path:polygon(50%_0,100%_100%,0_100%)]" />}
              {t.icon === "down" && <i className="ml-2 mt-1 w-[18px] h-2.5 bg-current [clip-path:polygon(0_0,100%_0,50%_100%)]" />}
            </span>
            <button
              aria-label={`Mute ${t.name}`}
              className="size-[21px] shrink-0 rounded-full border-2 border-[#16200f] bg-linear-to-b from-[#8ccf3e] to-[#e2f6a8] ring-1 ring-white/40"
            />
          </>
        )}
        {t.dots && (
          <div className={clsx("absolute bottom-2 flex gap-1 opacity-30", t.group ? "left-7" : "left-4")}>
            <i className="size-1 bg-black" />
            <i className="size-1 bg-black" />
            <i className="size-1 bg-black" />
          </div>
        )}
      </div>
    </div>
  );
}

function TrackRow({ t }: { t: Track }) {
  return (
    <div className={clsx("flex shrink-0", t.h)}>
      <TrackHeader t={t} />
      <div className="w-[23px] shrink-0 bg-[#1c232a] pl-[3px] pr-0.5">
        <div
          className={clsx(
            "h-full bg-[#373e47]",
            t.selected ? "rounded-sm border-2 border-[#b5e550]" : "border-b-2 border-[#262d35]"
          )}
        />
      </div>
      <div className="relative flex-1 border-b-2 border-[#242b34]/80">
        <div className="absolute inset-x-0 top-0 -bottom-0.5">
          {t.clips.map((clip, i) => (
            <Clip key={i} {...clip} />
          ))}
        </div>
      </div>
    </div>
  );
}

// vertical grid, one cell every two bars
function Grid() {
  const cells = Array.from({ length: 80 }, (_, i) => i);
  return (
    <div className="absolute inset-y-0 left-[222px] right-0 flex">
      {cells.map((i) => (
        <div
          key={i}
          className={clsx(
            "border-l-2 basis-0",
            i >= 76
              ? "bg-[#334049] border-[#16232b]"
              : i % 4 < 2
                ? "bg-[#424851] border-[#20272f]"
                : "bg-[#3c434c] border-[#1d242c]"
          )}
          style={{ flexGrow: Math.min(2, BARS - i * 2) }}
        />
      ))}
    </div>
  );
}

/* ---------- header parts ---------- */

function Overview() {
  return (
    <div className="flex-1 flex bg-[#363d40]">
      <div className="relative w-[95%] border-2 border-[#666e71] bg-[#515c65] overflow-hidden">
        {tracks.map((t, row) =>
          t.clips.map((clip, i) => (
            <i
              key={`${row}-${i}`}
              className={clsx("absolute h-0.5 brightness-125", KINDS[clip.kind].bg)}
              style={{ left: pct(clip.at - 1), width: pct(clip.len), top: `${3 + row * 2.1}%` }}
            />
          ))
        )}
        <i className="absolute bottom-0 left-[46%] right-[7%] h-0.5 bg-[#9a9f9a]" />
      </div>
    </div>
  );
}

function Ruler() {
  const marks = Array.from({ length: 40 }, (_, i) => i * 4 + 1);
  return (
    <div className="flex flex-1 h-[38px] overflow-hidden text-[20px] leading-9">
      {marks.map((bar) => (
        <div
          key={bar}
          className={clsx(
            "relative basis-0 border-t-2 overflow-visible whitespace-nowrap",
            bar < 153
              ? "border-[#c48585] bg-linear-to-b from-[#9b6161] to-[#8d5355] text-[#f6cfcf] shadow-[inset_0_-2px_0_#b57473]"
              : "border-[#333e45] bg-linear-to-b from-[#263037] to-[#1d272e] text-[#8e9ca2]"
          )}
          style={{ flexGrow: Math.min(4, BARS - bar + 1) }}
        >
          {bar}
          {bar === 1 && (
            <svg viewBox="0 0 18 22" className="absolute left-0 top-1 w-[18px] h-[22px]">
              <path d="M0 1H16L12 10 0 20Z" fill="#b9dc6a" stroke="#f6f3c0" strokeWidth="2" />
            </svg>
          )}
        </div>
      ))}
    </div>
  );
}

const barBtn = "flex items-center justify-center border-2 border-[#6a7174] bg-[#50585b] text-[#1e262a]";

/* ---------- picker ---------- */

type PickerItem = { name: string; bg: string; ink: string; icon: string; wave?: WaveName; fill?: string };

const picker: PickerItem[] = [
  { name: "XLV_120_Em_Femal..", bg: "from-[#5d7c40] to-[#547238] border-[#3f5c28]", ink: "text-[#b4e8c4]", icon: "text-[#d2ffb4]", wave: "voiceA", fill: "fill-[#445c30]" },
  { name: "TFH_Bass_Loop_16_..", bg: "from-[#7a4bad] to-[#6c3fa0] border-[#54308a]", ink: "text-[#fdf0ff]", icon: "text-[#ecb6ff]", wave: "bass", fill: "fill-[#573580]" },
  { name: "XLV_120_Em_Femal..", bg: "from-[#5148ac] to-[#473da0] border-[#352c84]", ink: "text-[#f4f2ff]", icon: "text-[#bcb2ff]", wave: "voiceB", fill: "fill-[#3b3580]" },
  { name: "XLV_120_Em_Femal..", bg: "from-[#98a262] to-[#8c9658] border-[#6d763e]", ink: "text-[#f8ffe8]", icon: "text-[#fffee0]", wave: "voiceC", fill: "fill-[#757e50]" },
  { name: "XLV_120_Em_Femal..", bg: "from-[#98a262] to-[#8c9658] border-[#6d763e]", ink: "text-[#f8ffe8]", icon: "text-[#fffee0]", wave: "voiceC", fill: "fill-[#757e50]" },
  { name: "XLV_120_Em_Femal..", bg: "from-[#dbe5e8] to-[#c8d8de] border-[#eef8fb]", ink: "text-[#857536]", icon: "text-white", wave: "voiceC", fill: "fill-[#a9b1b2]" },
  { name: "TFH2_Drum_Loop_1..", bg: "from-[#bcc388] to-[#aeb57a] border-[#8b925c]", ink: "text-white", icon: "text-white", wave: "drum", fill: "fill-[#939a6c]" },
  { name: "TFH2_Drum_Loop_1..", bg: "from-[#565e58] to-[#4c544f] border-[#3a413d]", ink: "text-[#ccd0cc]", icon: "text-[#d0d6d2]", wave: "drum", fill: "fill-[#434a45]" },
  { name: "KSHMR Trumpet Loo..", bg: "from-[#c4cb94] to-[#b4bb84] border-[#8c925e]", ink: "text-[#20343a]", icon: "text-white", wave: "trumpet", fill: "fill-[#969d72]" },
  { name: "fx lfo crzad", bg: "from-[#764b6d] to-[#6a4062] border-[#552f4e]", ink: "text-[#e4cfe4]", icon: "text-[#f0bce8]", wave: "lfo", fill: "fill-[#57364f]" },
  { name: "perc 222", bg: "from-[#dba4b8] to-[#cb94a8] border-[#a87488]", ink: "text-white", icon: "text-white", wave: "tail", fill: "fill-[#b4869a]" },
  { name: "hat amaoty", bg: "from-[#825590] to-[#764a84] border-[#5d3669]", ink: "text-[#f4e4fa]", icon: "text-[#f8ccff]", wave: "thin", fill: "fill-[#633f70]" },
  { name: "hat amaoty  #2", bg: "from-[#825590] to-[#764a84] border-[#5d3669]", ink: "text-[#f4e4fa]", icon: "text-[#f8ccff]", wave: "thin", fill: "fill-[#633f70]" },
  { name: "reverse biigg", bg: "from-[#b0b3c0] to-[#a0a3b0] border-[#82848e]", ink: "text-white", icon: "text-white", wave: "rise", fill: "fill-[#82858f]" },
  { name: "Audio Clip", bg: "from-[#65678a] to-[#595b7c] border-[#464866]", ink: "text-[#eceaf2]", icon: "text-[#dcdeff]" },
  { name: "sub down", bg: "from-[#7c3a38] to-[#70312f] border-[#521f1e]", ink: "text-[#b4b4ec]", icon: "text-[#f4aaa6]", wave: "sub", fill: "fill-[#592b2a]" },
  { name: "sub down  #2", bg: "from-[#b0beb8] to-[#a2b0aa] border-[#7f8d87]", ink: "text-white", icon: "text-white", wave: "sub", fill: "fill-[#84908a]" },
  { name: "vox shot na", bg: "from-[#766ac6] to-[#6a5eb8] border-[#4e4398]", ink: "text-white", icon: "text-[#f4dcf8]", wave: "vox", fill: "fill-[#594f96]" },
  { name: "perc loop bongo", bg: "from-[#513274] to-[#472a68] border-[#32194e]", ink: "text-[#e2b6dc]", icon: "text-[#c8a0f0]", wave: "bongo", fill: "fill-[#372052]" },
  { name: "perc low cut emd", bg: "from-[#565a60] to-[#4d5156] border-[#3c4044]", ink: "text-[#d8d8d8]", icon: "text-[#d2d6da]", wave: "emd", fill: "fill-[#44474b]" },
  { name: "perc low cut emd  #2", bg: "from-[#9068ae] to-[#845ca2] border-[#664484]", ink: "text-white", icon: "text-[#fcdcff]", wave: "decay", fill: "fill-[#6f4e88]" },
  { name: "reverse big", bg: "from-[#464672] to-[#3d3d66] border-[#2a2a4c]", ink: "text-[#e8d0cc]", icon: "text-[#b8b4e4]", wave: "riseBig", fill: "fill-[#323252]" },
  { name: "crash main", bg: "from-[#42378a] to-[#392e7e] border-[#271c64]", ink: "text-[#f2d0d4]", icon: "text-[#b0a2ff]", wave: "decay", fill: "fill-[#30275e]" },
  { name: "Noise DROP", bg: "from-[#987c9e] to-[#8a6e90] border-[#6b5270]", ink: "text-white", icon: "text-white", wave: "swell", fill: "fill-[#755d7a]" },
];

function Picker() {
  return (
    <aside className="flex w-[304px] shrink-0 flex-col">
      <div className="flex h-20 items-center border-b-2 border-[#1f262b] pt-7 text-[#5a6265]">
        <button aria-label="Patterns" className="ml-6">
          <PianoIcon className="w-[30px] h-[22px]" />
        </button>
        <button aria-label="Audio clips" className="ml-[60px] text-[#dfe5e8]">
          <WaveIcon className="w-10 h-7" />
        </button>
        <button aria-label="Automation clips" className="ml-[60px]">
          <AutoIcon className="w-8 h-[26px]" />
        </button>
      </div>
      <div className="mt-0.5 flex min-h-0 flex-1">
        <div className="flex w-[273px] flex-col gap-[7px] overflow-hidden border-r-2 border-[#20272c] bg-[#343c45] pt-[7px] pr-px pl-px">
          {picker.map((p, i) => (
            <button
              key={i}
              className={clsx("relative flex h-[55px] shrink-0 items-center rounded-[3px] border-2 bg-linear-to-b pl-1 pr-1 text-[22px]", p.bg, p.ink)}
            >
              {p.wave && <Wave name={p.wave} className={p.fill ?? ""} />}
              <span className="relative flex-1 pb-1 text-left whitespace-pre">{p.name}</span>
              <WaveIcon className={clsx("relative mb-1 h-6 w-8", p.icon)} />
            </button>
          ))}
        </div>
        <div className="ml-0.5 flex w-[29px] flex-col gap-0.5 border-r-2 border-[#20272c] bg-[#353b3e]">
          <button aria-label="Picker options" className={clsx(barBtn, "h-7")}>
            <i className="w-1 h-2 bg-current" />
          </button>
          <button aria-label="Picker up" className={clsx(barBtn, "h-[26px]")}>
            <ChevronUp className="size-5" />
          </button>
          <div className="h-[86px] border-2 border-[#6a7174] bg-[#50585b]" />
          <button aria-label="Picker down" className={clsx(barBtn, "mt-auto h-[26px]")}>
            <ChevronDown className="size-5" />
          </button>
        </div>
      </div>
    </aside>
  );
}

function TitleBar() {
  return (
    <header className="flex h-[56px] shrink-0 items-center border-t border-[#2a3134] pl-[26px] pr-5 pt-1.5 text-[#d8dde0]">
      <i className="w-2 h-4 bg-current [clip-path:polygon(0_0,100%_50%,0_100%)]" />
      {tools.map((t) => (
        <button key={t.name} aria-label={t.name} className={clsx(t.gap, t.active && "text-[#8ccaff]")}>
          <ToolIcon>{t.icon}</ToolIcon>
        </button>
      ))}
      <ToolIcon className="ml-9">
        <path d="M2 10H6L14 3V27L6 20H2Z" {...line} />
        <path d="M19 7 30 15 19 23Z" />
      </ToolIcon>
      <h1 className="ml-3.5 pb-1 text-[28px] whitespace-nowrap">Playlist - Arrangement</h1>
      <i className="ml-4 w-2 h-4 bg-[#7d8588] [clip-path:polygon(0_0,100%_50%,0_100%)]" />
      <span className="ml-3 pb-1 text-[28px]">bongo</span>
      <i className="ml-3 w-2 h-4 bg-[#7d8588] [clip-path:polygon(0_0,100%_50%,0_100%)]" />
      <div className="ml-auto flex items-center gap-5">
        <button aria-label="Minimize" className="h-4">
          <i className="block w-3.5 h-1 bg-current" />
        </button>
        <button aria-label="Maximize" className="w-[18px] h-4 border-2 border-t-4 border-current" />
        <button aria-label="Close">
          <svg viewBox="0 0 18 18" className="size-[18px]">
            <path d="M1 1 17 17M17 1 1 17" stroke="currentColor" strokeWidth="3" />
          </svg>
        </button>
      </div>
    </header>
  );
}

function AddPanel() {
  return (
    <div className="flex h-20 w-[220px] shrink-0 gap-0.5 pt-0.5">
      <button
        aria-label="Add track"
        className="flex w-[58px] items-center justify-center bg-[#50585b] pt-8 pl-1.5 text-[#dfe5e8] [clip-path:polygon(40%_0,100%_0,100%_100%,0_100%,8%_62%,26%_12%)]"
      >
        <svg viewBox="0 0 16 16" className="size-4">
          <path d="M8 0V16M0 8H16" stroke="currentColor" strokeWidth="3" />
        </svg>
      </button>
      <div className="grid flex-1 grid-cols-3 items-center justify-items-center border-2 border-[#5f686b] bg-[#50585b] pl-1 text-[#7e868a]">
        <button aria-label="Audio" className="text-[#dfe5e8]">
          <WaveIcon className="w-10 h-7" />
        </button>
        <button aria-label="Automation">
          <AutoIcon className="w-8 h-[26px]" />
        </button>
        <button aria-label="Piano">
          <PianoIcon className="w-[30px] h-[22px]" />
        </button>
        <button aria-label="Crossfade" className="text-[#dfe5e8]">
          <svg viewBox="0 0 20 20" className="size-5">
            <path d="M1 1C9 1 11 19 19 19M19 1C11 1 9 19 1 19" fill="none" stroke="currentColor" strokeWidth="2.500" />
          </svg>
        </button>
        <button aria-label="Fade">
          <svg viewBox="0 0 20 20" className="size-5">
            <path d="M1 19C10 19 10 2 19 1M2 1V14M0 10H16" fill="none" stroke="currentColor" strokeWidth="2" />
          </svg>
        </button>
        <button aria-label="Stretch">
          <svg viewBox="0 0 20 16" className="w-5 h-4">
            <path d="M7 2 1 8 7 14M13 2 19 8 13 14M3 8H17M10 4V12" fill="none" stroke="currentColor" strokeWidth="2" />
          </svg>
        </button>
      </div>
    </div>
  );
}

export default function App() {
  return (
    <div className="flex h-screen flex-col overflow-hidden bg-[#41494c] font-[Roboto,sans-serif] text-white">
      <div className="h-1 shrink-0 bg-[#5b6366]" />
      <TitleBar />
      <main className="flex min-h-0 flex-1">
        <div className="flex w-4 shrink-0 flex-col items-center border-r border-[#31383b]">
          <div className="my-auto flex flex-col gap-1">
            {[0, 1, 2, 3, 4].map((i) => (
              <i key={i} className="size-1 bg-[#2a3033]" />
            ))}
          </div>
        </div>
        <Picker />

        <section className="ml-[11px] flex min-w-0 flex-1 flex-col border-l-2 border-[#1f262b]">
          <div className="flex h-[82px] shrink-0 bg-[#41494c] border-b-2 border-[#23292f]">
            <AddPanel />
            <div className="flex min-w-0 flex-1 flex-col pl-0.5">
              <div className="flex h-[42px] gap-0.5 border-y-2 border-[#23292d]">
                <button aria-label="Scroll left" className={clsx(barBtn, "w-[38px]")}>
                  <ChevronLeft className="size-6" />
                </button>
                <Overview />
                <button aria-label="Scroll right" className={clsx(barBtn, "w-[38px]")}>
                  <ChevronRight className="size-6" />
                </button>
                <button aria-label="Playlist options" className={clsx(barBtn, "w-[38px] mr-0.5")}>
                  <i className="size-1.5 bg-current" />
                </button>
              </div>
              <div className="flex gap-0.5">
                <Ruler />
                <button aria-label="Scroll up" className={clsx(barBtn, "w-[38px] mr-0.5")}>
                  <ChevronUp className="size-6" />
                </button>
              </div>
            </div>
          </div>

          <div className="flex min-h-0 flex-1">
            <div className="relative flex min-w-0 flex-1 flex-col overflow-hidden bg-[#1f262d]">
              <Grid />
              <div className="relative flex flex-col">
                {tracks.map((t, i) => (
                  <TrackRow key={i} t={t} />
                ))}
              </div>
            </div>
            <div className="ml-0.5 flex w-10 shrink-0 flex-col border-r-2 border-[#20272c] bg-[#353b3e]">
              <div className="h-[66px] border-2 border-[#6a7174] bg-[#50585b]" />
              <button aria-label="Scroll down" className={clsx(barBtn, "mt-auto h-[38px]")}>
                <ChevronDown className="size-6" />
              </button>
            </div>
          </div>
        </section>
        <div className="w-3 shrink-0" />
      </main>
      <footer className="h-3.5 shrink-0 border-t-2 border-[#22292c]" />
    </div>
  );
}
